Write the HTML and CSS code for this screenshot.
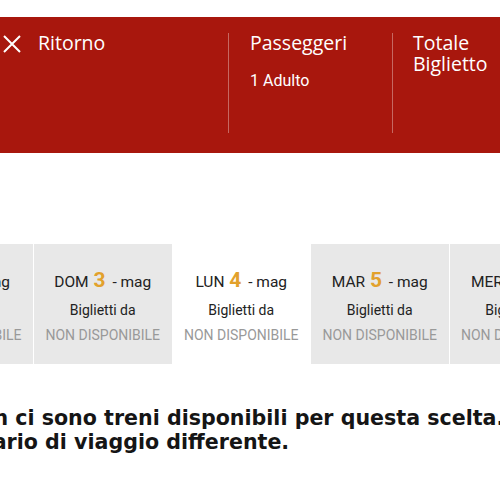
FILE: index.html
```
<!DOCTYPE html>
<html lang="it">
<head>
    <meta charset="UTF-8">
    <meta name="viewport" content="width=device-width, initial-scale=1.0">
    <title>Scelta del treno</title>
    <link rel="stylesheet" href="styles.css">
</head>
<body>

    <div class="booking-bar">
        <div class="col col-return">
            <svg class="close-icon" width="18" height="18" viewBox="0 0 18 18">
                <path d="M1 1 L17 17 M17 1 L1 17" stroke="#fff" stroke-width="2" fill="none"/>
            </svg>
            <span class="col-title">Ritorno</span>
        </div>
        <div class="col col-passengers">
            <div class="col-title">Passeggeri</div>
            <div class="col-value">1 Adulto</div>
        </div>
        <div class="col col-total">
            <div class="col-title">Totale<br>Biglietto</div>
        </div>
    </div>

    <!-- giorni -->
    <div class="days">
        <div class="day">
            <div class="day-date">SAB <b>2</b> - mag</div>
            <div class="day-label">Biglietti da</div>
            <div class="day-price">NON DISPONIBILE</div>
        </div>
        <div class="day">
            <div class="day-date">DOM <b>3</b> - mag</div>
            <div class="day-label">Biglietti da</div>
            <div class="day-price">NON DISPONIBILE</div>
        </div>
        <div class="day selected">
            <div class="day-date">LUN <b>4</b> - mag</div>
            <div class="day-label">Biglietti da</div>
            <div class="day-price">NON DISPONIBILE</div>
        </div>
        <div class="day">
            <div class="day-date">MAR <b>5</b> - mag</div>
            <div class="day-label">Biglietti da</div>
            <div class="day-price">NON DISPONIBILE</div>
        </div>
        <div class="day">
            <div class="day-date">MER <b>6</b> - mag</div>
            <div class="day-label">Biglietti da</div>
            <div class="day-price">NON DISPONIBILE</div>
        </div>
    </div>

    <p class="no-trains">
        <span class="line line-1">Non ci sono treni disponibili per questa scelta.</span>
        <span class="line line-2">Prova un orario di viaggio differente.</span>
    </p>

</body>
</html>
```
FILE: styles.css
```
body {
    margin: 0;
    background: #fff;
    overflow: hidden;
    width: 500px;
    height: 500px;
}

.booking-bar {
    margin-top: 17px;
    height: 136px;
    box-sizing: border-box;
    padding: 16px 0 20px;
    background-color: #a8170d;
    display: flex;
    color: #fff;
    font-family: 'Open Sans', sans-serif;
}

.col {
    flex: none;
    box-sizing: border-box;
    border-right: 1px solid rgba(255, 255, 255, 0.35);
    padding: 0 20px;
}

.col-return {
    width: 229px;
    padding-left: 3px;
    display: flex;
    align-items: flex-start;
}

.close-icon {
    margin-top: 2px;
    margin-right: 17px;
}

.col-passengers {
    width: 164px;
    padding-left: 21px;
}

.col-total {
    flex: 1;
    border-right: none;
    padding-left: 20px;
    white-space: nowrap;
}

.col-title {
    font-size: 19.5px;
    line-height: 21px;
    margin-top: -1px;
}

.col-value {
    font-family: Roboto, sans-serif;
    font-size: 16px;
    margin-top: 18px;
}

/* giorni */
.days {
    display: flex;
    gap: 1px;
    margin-top: 91px;
    margin-left: -104.5px;
    font-family: Roboto, sans-serif;
}

.day {
    flex: none;
    width: 137.5px;
    height: 120px;
    box-sizing: border-box;
    padding-top: 26px;
    background: #e8e8e8;
    text-align: center;
    white-space: nowrap;
    color: #222;
}

.day.selected {
    background: #fff;
}

.day-date {
    font-size: 15.5px;
    line-height: 20px;
}

.day-date b {
    color: #e2a12c;
    font-size: 21px;
    margin: 0 3px 0 1px;
}

.day-label {
    font-size: 14px;
    margin-top: 10px;
}

.day-price {
    font-size: 14px;
    color: #999;
    margin-top: 9px;
}

.no-trains {
    margin: 42px 0 0;
    font-family: 'DejaVu Sans', sans-serif;
    font-weight: 700;
    font-size: 20.6px;
    line-height: 24px;
    color: #151515;
    white-space: nowrap;
}

.line {
    display: block;
}

.line-1 {
    margin-left: -38px;
}

.line-2 {
    margin-left: -142px;
}
```
